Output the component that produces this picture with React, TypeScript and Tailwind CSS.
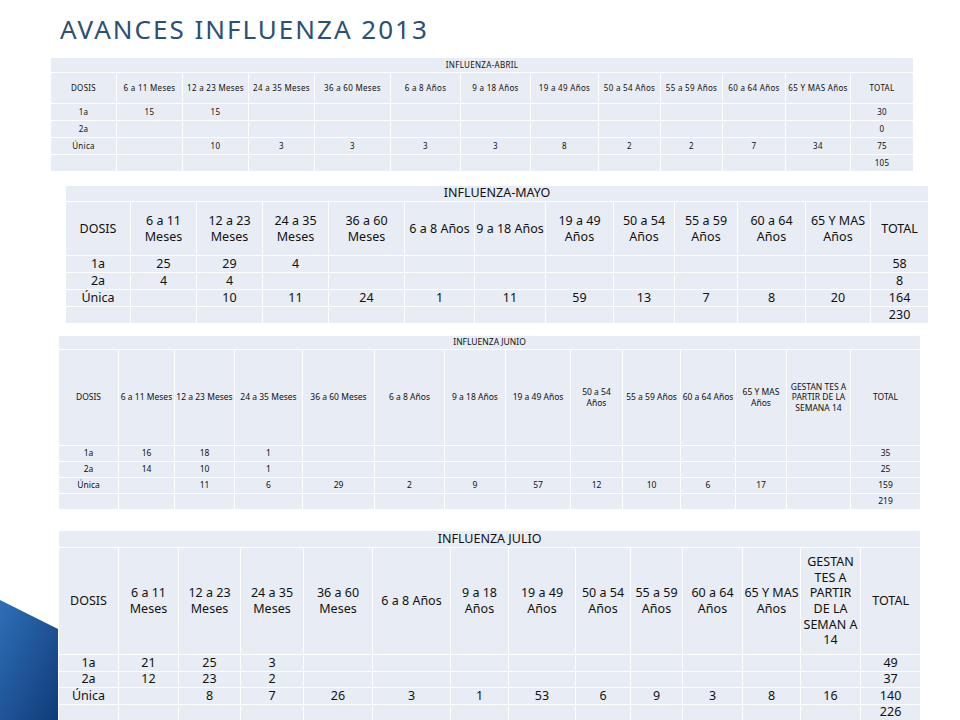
const T1 = {
  title: "INFLUENZA-ABRIL",
  widths: [66, 66, 66, 66, 76, 70, 70, 68, 62, 62, 63, 65, 63],
  head: ["DOSIS", "6 a 11 Meses", "12 a 23 Meses", "24 a 35 Meses", "36 a 60 Meses", "6 a 8 Años", "9 a 18 Años", "19 a 49 Años", "50 a 54 Años", "55 a 59 Años", "60 a 64 Años", "65  Y MAS Años", "TOTAL"],
  rows: [
    ["1a", "15", "15", "", "", "", "", "", "", "", "", "", "30"],
    ["2a", "", "", "", "", "", "", "", "", "", "", "", "0"],
    ["Única", "", "10", "3", "3", "3", "3", "8", "2", "2", "7", "34", "75"],
    ["", "", "", "", "", "", "", "", "", "", "", "", "105"],
  ],
};

const T2 = {
  title: "INFLUENZA-MAYO",
  widths: [65, 66, 66, 66, 76, 70, 71, 68, 61, 63, 68, 65, 58],
  head: ["DOSIS", "6 a 11 Meses", "12 a 23 Meses", "24 a 35 Meses", "36 a 60 Meses", "6 a 8 Años", "9 a 18 Años", "19 a 49 Años", "50 a 54 Años", "55 a 59 Años", "60 a 64 Años", "65  Y MAS Años", "TOTAL"],
  rows: [
    ["1a", "25", "29", "4", "", "", "", "", "", "", "", "", "58"],
    ["2a", "4", "4", "", "", "", "", "", "", "", "", "", "8"],
    ["Única", "", "10", "11", "24", "1", "11", "59", "13", "7", "8", "20", "164"],
    ["", "", "", "", "", "", "", "", "", "", "", "", "230"],
  ],
};

const T3 = {
  title: "INFLUENZA JUNIO",
  widths: [60, 56, 60, 68, 72, 70, 61, 65, 52, 58, 55, 51, 64, 70],
  head: ["DOSIS", "6 a 11 Meses", "12 a 23 Meses", "24 a 35 Meses", "36 a 60 Meses", "6 a 8 Años", "9 a 18 Años", "19 a 49 Años", "50 a 54 Años", "55 a 59 Años", "60 a 64 Años", "65  Y MAS Años", "GESTAN TES A PARTIR DE LA SEMANA 14", "TOTAL"],
  rows: [
    ["1a", "16", "18", "1", "", "", "", "", "", "", "", "", "", "35"],
    ["2a", "14", "10", "1", "", "", "", "", "", "", "", "", "", "25"],
    ["Única", "", "11", "6", "29", "2", "9", "57", "12", "10", "6", "17", "", "159"],
    ["", "", "", "", "", "", "", "", "", "", "", "", "", "219"],
  ],
};

const T4 = {
  title: "INFLUENZA JULIO",
  widths: [60, 60, 62, 63, 69, 78, 58, 67, 55, 52, 60, 58, 60, 60],
  head: ["DOSIS", "6 a 11 Meses", "12 a 23 Meses", "24 a 35 Meses", "36 a 60 Meses", "6 a 8 Años", "9 a 18 Años", "19 a 49 Años", "50 a 54 Años", "55 a 59 Años", "60 a 64 Años", "65  Y MAS Años", "GESTAN TES A PARTIR DE LA SEMAN A 14", "TOTAL"],
  rows: [
    ["1a", "21", "25", "3", "", "", "", "", "", "", "", "", "", "49"],
    ["2a", "12", "23", "2", "", "", "", "", "", "", "", "", "", "37"],
    ["Única", "", "8", "7", "26", "3", "1", "53", "6", "9", "3", "8", "16", "140"],
    ["", "", "", "", "", "", "", "", "", "", "", "", "", "226"],
  ],
};

type Data = typeof T1;

function DataTable({ d, text, titleH, headH, rowH, className }: { d: Data; text: string; titleH: string; headH: string; rowH: string; className: string }) {
  return (
    <table className={`border-collapse table-fixed bg-[#e8ecf4] text-[#111] ${text} ${className}`}>
      <colgroup>
        {d.widths.map((w, i) => (
          <col key={i} style={{ width: w }} />
        ))}
      </colgroup>
      <tbody>
        <tr className={titleH}>
          <td colSpan={d.widths.length} className="border border-white text-center leading-none">{d.title}</td>
        </tr>
        <tr className={headH}>
          {d.head.map((h, i) => (
            <td key={i} className="border border-white text-center leading-tight px-px">{h}</td>
          ))}
        </tr>
        {d.rows.map((r, i) => (
          <tr key={i} className={rowH}>
            {r.map((c, j) => (
              <td key={j} className="border border-white text-center leading-none">{c}</td>
            ))}
          </tr>
        ))}
      </tbody>
    </table>
  );
}

export default function App() {
  return (
    <div className="relative w-[960px] h-[720px] overflow-hidden bg-white font-['DejaVu_Sans',sans-serif]">
      <svg className="absolute left-0 top-[590px]" width="70" height="130" viewBox="0 0 70 130">
        <defs>
          <linearGradient id="g" x1="0" y1="0" x2="1" y2="1">
            <stop offset="0" stopColor="#2f6fb8" />
            <stop offset="1" stopColor="#0f3b78" />
          </linearGradient>
        </defs>
        <polygon points="0,10 60,40 60,130 0,130" fill="url(#g)" />
      </svg>
      <div className="relative flex flex-col pt-[12px]">
        <h1 className="ml-[60px] h-[45px] text-[26px] leading-[34px] tracking-[2px] text-[#2c4f74] font-['Open_Sans',sans-serif]">AVANCES INFLUENZA 2013</h1>
        <DataTable d={T1} text="text-[8px] tracking-[0.3px]" titleH="h-[15px]" headH="h-[31px]" rowH="h-[17px]" className="ml-[50px] w-[863px]" />
        <DataTable d={T2} text="text-[12.5px]" titleH="h-[16px]" headH="h-[54px]" rowH="h-[17px]" className="ml-[65px] mt-[13px] w-[863px]" />
        <DataTable d={T3} text="text-[8.5px]" titleH="h-[14px]" headH="h-[96px]" rowH="h-[16px]" className="ml-[58px] mt-[11px] w-[862px]" />
        <DataTable d={T4} text="text-[12.5px]" titleH="h-[17px]" headH="h-[107px]" rowH="h-[16.5px]" className="ml-[58px] mt-[20px] w-[862px]" />
      </div>
    </div>
  );
}
